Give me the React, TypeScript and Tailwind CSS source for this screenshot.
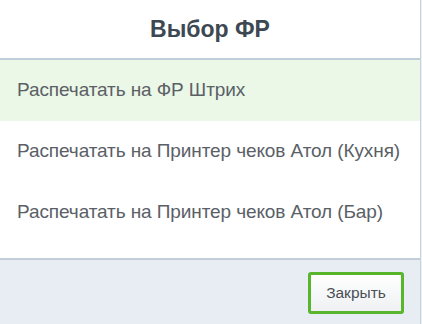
import { useState } from "react"

const printers = [
  "Распечатать на ФР Штрих",
  "Распечатать на Принтер чеков Атол (Кухня)",
  "Распечатать на Принтер чеков Атол (Бар)",
]

export default function App() {
  const [active, setActive] = useState(0)

  return (
    <div className="w-[422px] h-[324px] bg-[#eef1f4] font-['Liberation_Sans',Arial,sans-serif] overflow-hidden">
      <div className="w-[421px] h-full flex flex-col border-r border-[#c9d1db]">
        {/* Header */}
        <div className="h-[60px] bg-white flex items-center justify-center border-b-2 border-[#c3cedb]">
          <h2 className="text-[23px] font-bold text-[#3d4852] mt-[1px]">Выбор ФР</h2>
        </div>

        {/* List */}
        <div className="bg-white pb-[15px]">
          {printers.map((p, i) => (
            <div
              key={p}
              onMouseEnter={() => setActive(i)}
              className={
                "h-[61px] flex items-center pl-[17px] text-[19px] tracking-[-0.1px] text-[#5a6066] cursor-pointer " +
                (active === i ? "bg-[#ebf7e7]" : "bg-white")
              }
            >
              {p}
            </div>
          ))}
        </div>

        {/* Footer */}
        <div className="flex-1 bg-[#e8edf3] border-t-2 border-[#c3cdd8] flex justify-end items-start pt-[12px] pr-[16px]">
          <button className="w-[96px] h-[42px] rounded-[3px] border-[3px] border-[#58b52c] bg-gradient-to-b from-white to-[#eef0f2] text-[15.5px] text-[#4a4f55]">
            Закрыть
          </button>
        </div>
      </div>
    </div>
  )
}
